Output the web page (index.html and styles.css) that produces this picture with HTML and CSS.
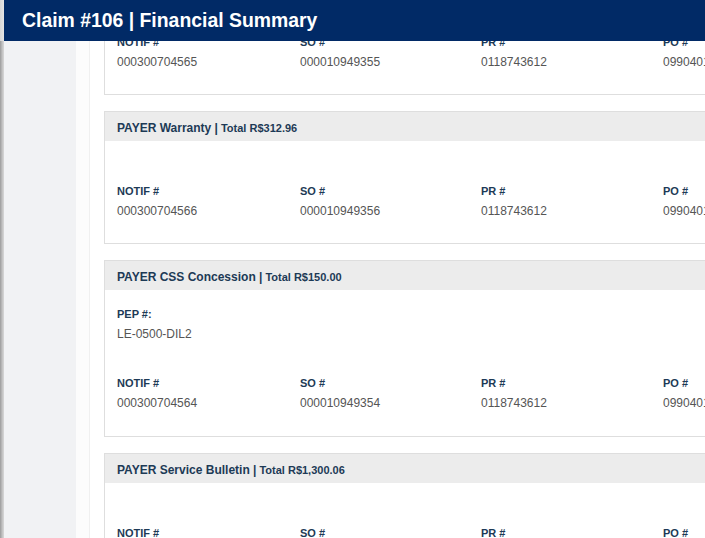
FILE: index.html
```html
<!DOCTYPE html>
<html>
<head>
<meta charset="utf-8">
<link rel="stylesheet" href="styles.css">
</head>
<body>
<div class="edge"><div class="edge-top"></div><div class="edge-rest"></div></div>
<div class="modal">
  <div class="modal-header">Claim #106 | Financial Summary</div>
  <div class="modal-body">
    <aside class="sidebar"></aside>
    <main class="main">
      <div class="panel">
        <div class="cards">
          <section class="card">
            <div class="card-head"><span class="card-title">PAYER Warranty |</span><span class="card-total">Total R$312.96</span></div>
            <div class="card-body">
              <div class="pep-empty"></div>
              <div class="fields">
                <div class="field"><div class="label">NOTIF #</div><div class="value">000300704565</div></div>
                <div class="field"><div class="label">SO #</div><div class="value">000010949355</div></div>
                <div class="field"><div class="label">PR #</div><div class="value">0118743612</div></div>
                <div class="field"><div class="label">PO #</div><div class="value">0990401157</div></div>
              </div>
            </div>
          </section>
          <section class="card">
            <div class="card-head"><span class="card-title">PAYER Warranty |</span><span class="card-total">Total R$312.96</span></div>
            <div class="card-body">
              <div class="pep-empty"></div>
              <div class="fields">
                <div class="field"><div class="label">NOTIF #</div><div class="value">000300704566</div></div>
                <div class="field"><div class="label">SO #</div><div class="value">000010949356</div></div>
                <div class="field"><div class="label">PR #</div><div class="value">0118743612</div></div>
                <div class="field"><div class="label">PO #</div><div class="value">0990401157</div></div>
              </div>
            </div>
          </section>
          <section class="card">
            <div class="card-head"><span class="card-title">PAYER CSS Concession |</span><span class="card-total">Total R$150.00</span></div>
            <div class="card-body">
              <div class="field pep"><div class="label">PEP #:</div><div class="value">LE-0500-DIL2</div></div>
              <div class="fields">
                <div class="field"><div class="label">NOTIF #</div><div class="value">000300704564</div></div>
                <div class="field"><div class="label">SO #</div><div class="value">000010949354</div></div>
                <div class="field"><div class="label">PR #</div><div class="value">0118743612</div></div>
                <div class="field"><div class="label">PO #</div><div class="value">0990401157</div></div>
              </div>
            </div>
          </section>
          <section class="card">
            <div class="card-head"><span class="card-title">PAYER Service Bulletin |</span><span class="card-total">Total R$1,300.06</span></div>
            <div class="card-body">
              <div class="pep-empty"></div>
              <div class="fields">
                <div class="field"><div class="label">NOTIF #</div><div class="value">000300704567</div></div>
                <div class="field"><div class="label">SO #</div><div class="value">000010949357</div></div>
                <div class="field"><div class="label">PR #</div><div class="value">0118743612</div></div>
                <div class="field"><div class="label">PO #</div><div class="value">0990401157</div></div>
              </div>
            </div>
          </section>
        </div>
      </div>
    </main>
  </div>
</div>
</body>
</html>
```
FILE: styles.css
```css
html, body {
  margin: 0;
  padding: 0;
  height: 538px;
  overflow: hidden;
}
body {
  display: flex;
  font-family: "Liberation Sans", Arial, sans-serif;
  background: #ffffff;
}
.edge {
  width: 4px;
  flex: none;
  display: flex;
  flex-direction: column;
}
.edge-top {
  height: 41px;
  background: linear-gradient(to right, #d6d6d6, #e4e4e4);
}
.edge-rest {
  flex: 1;
  background: linear-gradient(to right, #9c9c9c, #c4c4c4 60%, #d8d8d8);
}
.modal {
  flex: 1;
  min-width: 0;
  display: flex;
  flex-direction: column;
  height: 538px;
}
.modal-header {
  height: 41px;
  flex: none;
  background: #012a66;
  color: #ffffff;
  font-weight: bold;
  font-size: 19.4px;
  display: flex;
  align-items: center;
  padding-left: 18px;
  position: relative;
  z-index: 2;
}
.modal-body {
  flex: 1;
  display: flex;
  min-height: 0;
}
.sidebar {
  width: 72px;
  flex: none;
  background: #f1f2f4;
}
.main {
  flex: 1;
  min-width: 0;
  background: #fcfcfc;
  padding-left: 13px;
  overflow: hidden;
  display: flex;
}
.panel {
  flex: 1;
  min-width: 0;
  background: #ffffff;
  border-left: 1px solid #f0f0f0;
  padding-left: 14px;
}
.cards {
  margin-top: -79px;
  display: flex;
  flex-direction: column;
  gap: 16px;
}
.card {
  width: 760px;
  flex: none;
  border: 1px solid #dedede;
  background: #ffffff;
}
.card-head {
  height: 26px;
  padding: 3px 12px 0;
  background: #ececec;
  display: flex;
  align-items: baseline;
  line-height: 27px;
  color: #1d3a56;
  font-weight: bold;
  white-space: nowrap;
}
.card-title {
  font-size: 12px;
  margin-right: 3px;
}
.card-total {
  font-size: 11px;
}
.card-body {
  padding: 16px 12px 24px;
}
.pep-empty {
  height: 26px;
}
.pep {
  margin-bottom: 33px;
}
.pep + .fields {
  padding-bottom: 1px;
}
.fields {
  display: grid;
  grid-template-columns: 183px 181px 182px 182px;
}
.label {
  font-size: 11px;
  font-weight: bold;
  line-height: 16px;
  color: #1d3a56;
}
.value {
  font-size: 12px;
  line-height: 16px;
  margin-top: 4px;
  color: #555555;
  white-space: nowrap;
}
```
